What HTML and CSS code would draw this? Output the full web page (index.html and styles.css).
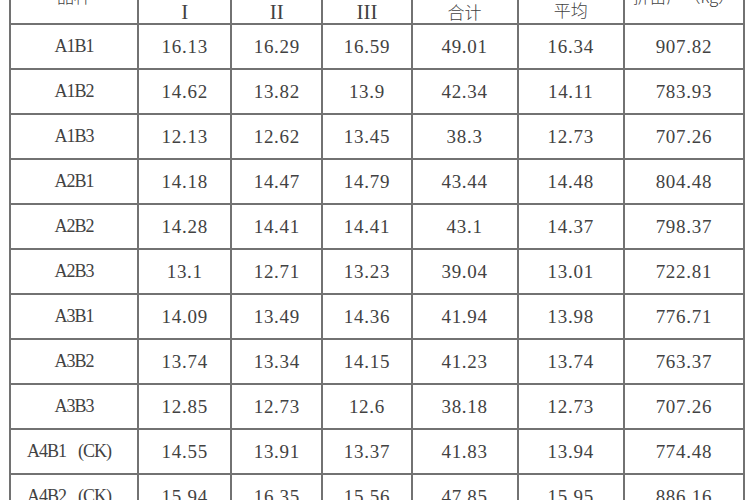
FILE: index.html
```html
<!DOCTYPE html>
<html lang="zh">
<head>
<meta charset="utf-8">
<link rel="stylesheet" href="styles.css">
</head>
<body>
<table class="data">
  <colgroup>
    <col class="c1"><col class="c2"><col class="c3"><col class="c4"><col class="c5"><col class="c6"><col class="c7">
  </colgroup>
  <thead>
    <tr>
      <th class="cjk high">品种</th>
      <th class="roman">I</th>
      <th class="roman">II</th>
      <th class="roman">III</th>
      <th class="cjk mid">合计</th>
      <th class="cjk up">平均</th>
      <th class="cjk high">折亩产（kg）</th>
    </tr>
  </thead>
  <tbody>
    <tr><td class="lbl">A1B1</td><td>16.13</td><td>16.29</td><td>16.59</td><td>49.01</td><td>16.34</td><td>907.82</td></tr>
    <tr><td class="lbl">A1B2</td><td>14.62</td><td>13.82</td><td>13.9</td><td>42.34</td><td>14.11</td><td>783.93</td></tr>
    <tr><td class="lbl">A1B3</td><td>12.13</td><td>12.62</td><td>13.45</td><td>38.3</td><td>12.73</td><td>707.26</td></tr>
    <tr><td class="lbl">A2B1</td><td>14.18</td><td>14.47</td><td>14.79</td><td>43.44</td><td>14.48</td><td>804.48</td></tr>
    <tr><td class="lbl">A2B2</td><td>14.28</td><td>14.41</td><td>14.41</td><td>43.1</td><td>14.37</td><td>798.37</td></tr>
    <tr><td class="lbl">A2B3</td><td>13.1</td><td>12.71</td><td>13.23</td><td>39.04</td><td>13.01</td><td>722.81</td></tr>
    <tr><td class="lbl">A3B1</td><td>14.09</td><td>13.49</td><td>14.36</td><td>41.94</td><td>13.98</td><td>776.71</td></tr>
    <tr><td class="lbl">A3B2</td><td>13.74</td><td>13.34</td><td>14.15</td><td>41.23</td><td>13.74</td><td>763.37</td></tr>
    <tr><td class="lbl">A3B3</td><td>12.85</td><td>12.73</td><td>12.6</td><td>38.18</td><td>12.73</td><td>707.26</td></tr>
    <tr><td class="lbl ckcell">A4B1<span class="ck">(CK)</span></td><td>14.55</td><td>13.91</td><td>13.37</td><td>41.83</td><td>13.94</td><td>774.48</td></tr>
    <tr><td class="lbl ckcell">A4B2<span class="ck">(CK)</span></td><td>15.94</td><td>16.35</td><td>15.56</td><td>47.85</td><td>15.95</td><td>886.16</td></tr>
  </tbody>
</table>
</body>
</html>
```

FILE: styles.css
```css
html, body {
  margin: 0;
  padding: 0;
  background: #ffffff;
  overflow: hidden;
}

body {
  width: 750px;
  height: 500px;
}

.data {
  margin: -30px 0 0 9px;
  border-collapse: collapse;
  table-layout: fixed;
  width: 736px;
  color: #424242;
}

.c1 { width: 128px; }
.c2 { width: 93px; }
.c3 { width: 91px; }
.c4 { width: 89px; }
.c5 { width: 106px; }
.c6 { width: 106px; }
.c7 { width: 120px; }

.data th,
.data td {
  border: 2px solid #727272;
  padding: 0;
  text-align: center;
  white-space: nowrap;
}

.data thead tr {
  height: 53px;
}

.data th {
  font-weight: normal;
  vertical-align: bottom;
  padding-bottom: 1px;
  line-height: 18px;
}

.data th.cjk {
  font-family: "Noto Sans CJK SC", sans-serif;
  font-size: 17px;
  font-weight: 300;
}

.data th.mid {
  padding-bottom: 2px;
}

.data th.up {
  padding-bottom: 4px;
}

.data th.high {
  padding-bottom: 18px;
}

.data th.roman {
  font-family: "Liberation Serif", serif;
  font-size: 21px;
  padding-bottom: 2px;
}

.data tbody tr {
  height: 45px;
}

.data td {
  font-family: "Liberation Serif", serif;
  font-size: 19px;
  letter-spacing: 0.7px;
  vertical-align: middle;
}

.data td.lbl {
  font-size: 18px;
  letter-spacing: -1px;
}

.data td.ckcell {
  padding-right: 10px;
}

.ck {
  margin-left: 12px;
}
```
